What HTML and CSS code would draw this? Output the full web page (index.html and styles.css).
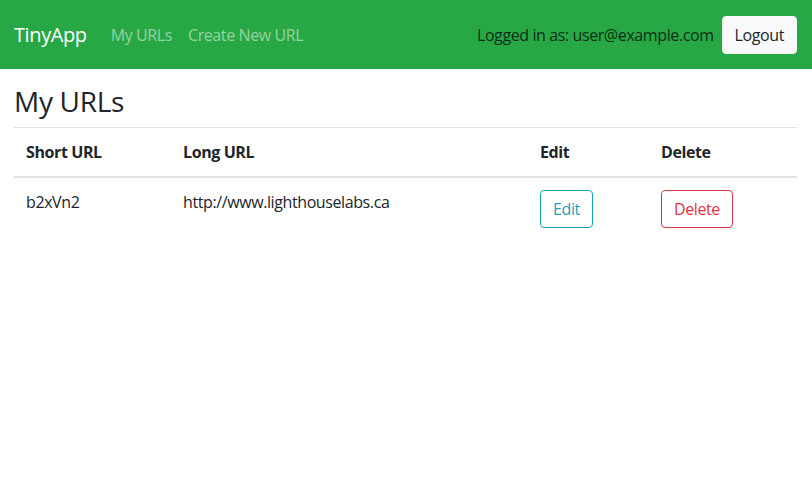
FILE: index.html
```html
<!DOCTYPE html>
<html lang="en">
<head>
<meta charset="utf-8">
<title>TinyApp</title>
<link rel="stylesheet" href="styles.css">
</head>
<body>
<nav class="navbar">
  <a class="brand" href="#">TinyApp</a>
  <div class="nav-links">
    <a class="nav-link" href="#">My URLs</a>
    <a class="nav-link" href="#">Create New URL</a>
  </div>
  <div class="nav-right">
    <span class="login-text">Logged in as: user@example.com</span>
    <button class="btn btn-light">Logout</button>
  </div>
</nav>
<main class="content">
  <h3 class="title">My URLs</h3>
  <table class="table">
    <thead>
      <tr>
        <th class="col-short">Short URL</th>
        <th class="col-long">Long URL</th>
        <th class="col-edit">Edit</th>
        <th class="col-delete">Delete</th>
      </tr>
    </thead>
    <tbody>
      <tr>
        <td>b2xVn2</td>
        <td>http://www.lighthouselabs.ca</td>
        <td><button class="btn btn-outline-info">Edit</button></td>
        <td><button class="btn btn-outline-danger">Delete</button></td>
      </tr>
    </tbody>
  </table>
</main>
</body>
</html>
```
FILE: styles.css
```css
* { box-sizing: border-box; }
body {
  margin: 0;
  font-family: "Open Sans", "Noto Sans", "Liberation Sans", sans-serif;
  font-size: 16px;
  line-height: 1.5;
  letter-spacing: -0.4px;
  color: #212529;
  background: #fff;
}
.navbar {
  display: flex;
  align-items: center;
  height: 69px;
  padding: 0 15px 0 14px;
  background: #28a745;
}
.brand {
  color: #fff;
  font-size: 20px;
  text-decoration: none;
  margin-right: 16px;
}
.nav-links { display: flex; flex: 1; }
.nav-link {
  color: rgba(255,255,255,.5);
  text-decoration: none;
  padding: 0 8px;
}
.nav-right { display: flex; align-items: center; }
.login-text { color: rgba(0,0,0,.75); margin-right: 8px; }
.btn {
  font-family: inherit;
  font-size: 16px;
  line-height: 1.5;
  letter-spacing: -0.4px;
  padding: 6px 12px;
  border-radius: 4px;
  border: 1px solid transparent;
  background: transparent;
  cursor: pointer;
}
.btn-light { background: #f8f9fa; border-color: #f8f9fa; color: #212529; }
.btn-outline-info { color: #17a2b8; border-color: #17a2b8; }
.btn-outline-danger { color: #dc3545; border-color: #dc3545; }
.content { padding: 16px 15px 0 14px; }
.title {
  margin: 0 0 8px;
  font-size: 28px;
  font-weight: 500;
  line-height: 1.2;
  letter-spacing: -0.3px;
}
.table { width: 100%; border-collapse: collapse; }
.table th, .table td {
  padding: 12px;
  text-align: left;
  vertical-align: top;
  border-top: 1px solid #dee2e6;
}
.table th { font-weight: 700; border-bottom: 2px solid #dee2e6; }
.table thead th { vertical-align: bottom; }
.table tbody tr:first-child td { border-top: none; }
.col-short { width: 157px; }
.col-long { width: 357px; }
.col-edit { width: 121px; }
```
